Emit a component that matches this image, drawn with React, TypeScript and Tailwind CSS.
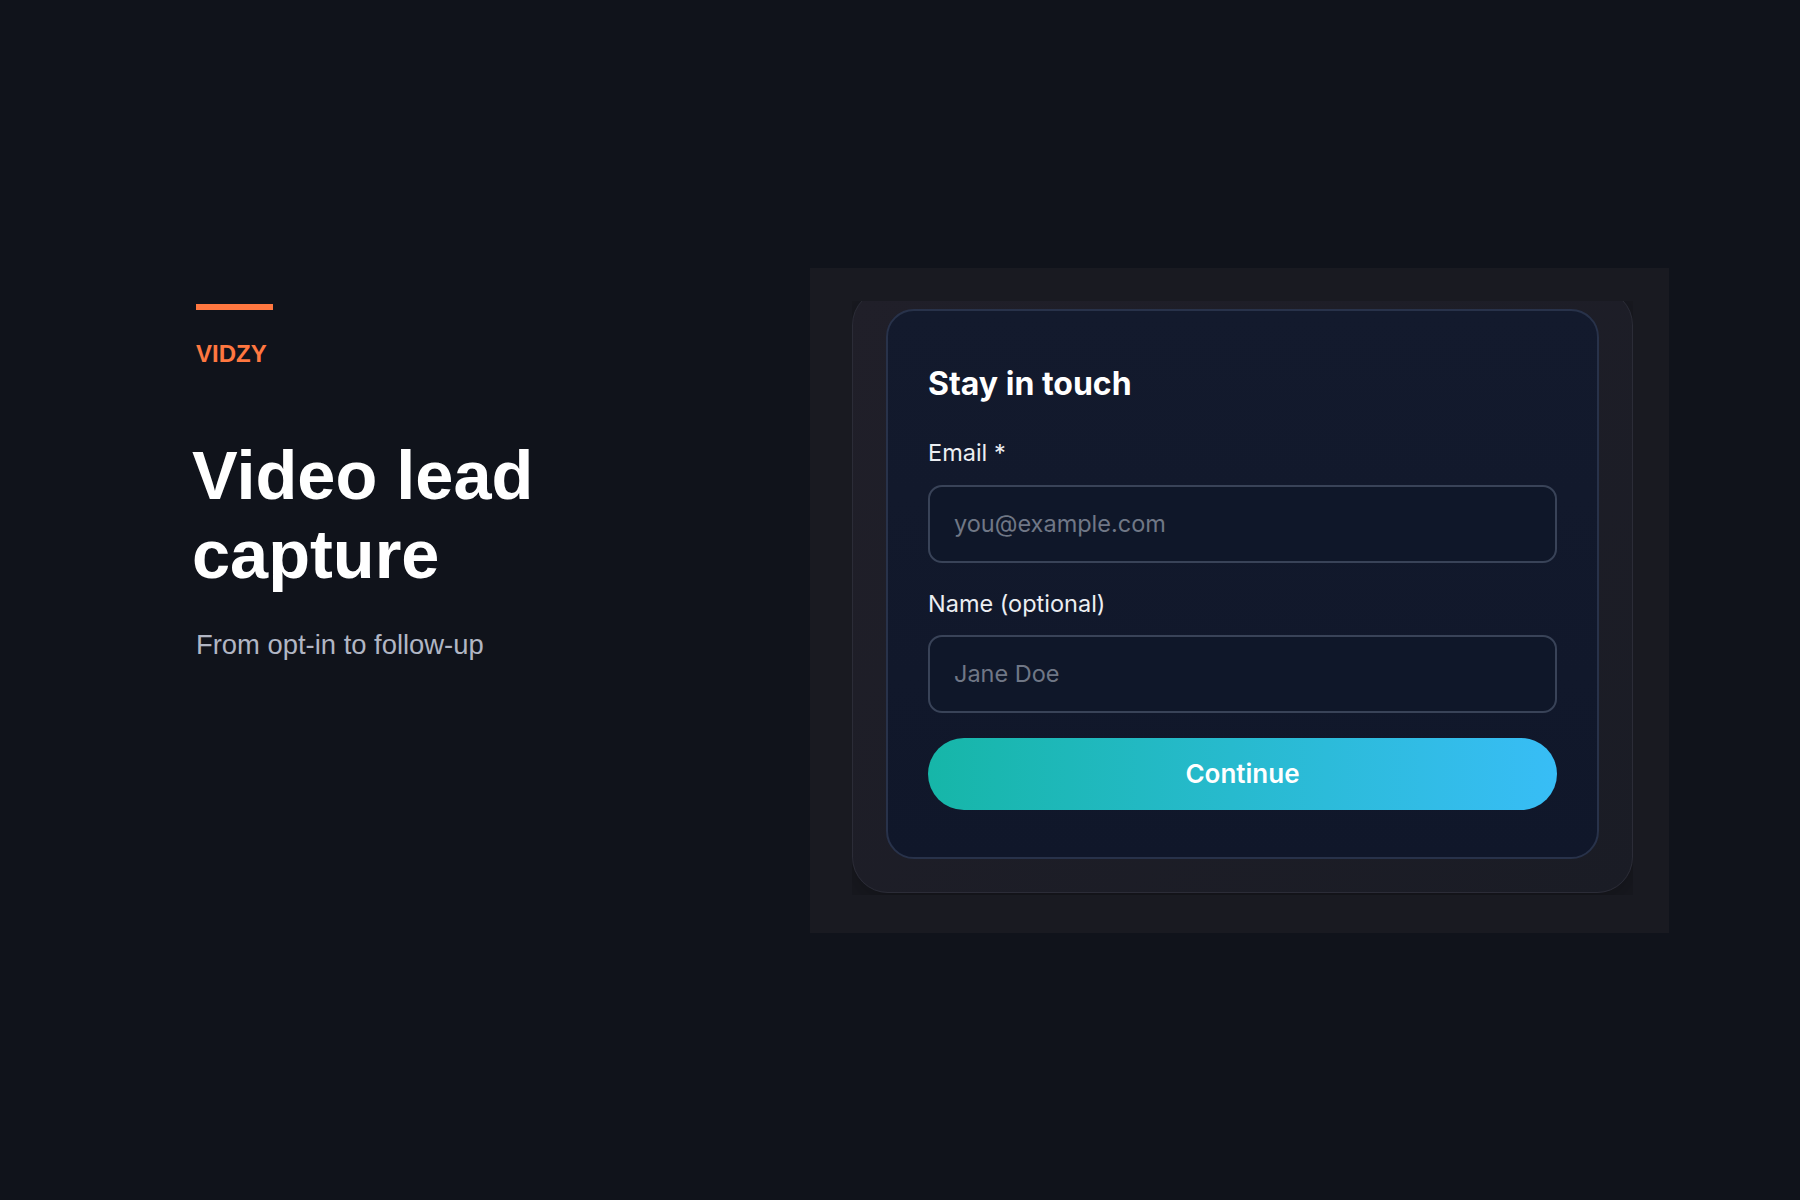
export default function App() {
  return (
    <main className="flex h-screen w-full items-center bg-[#10131b] pl-[196px] pr-[131px]">
      {/* left intro */}
      <section className="flex-1 self-start pt-[304px] font-['Liberation_Sans',Arial,sans-serif]">
        <div className="h-[6px] w-[77px] bg-[#ff7740]" />
        <p className="mt-[26px] text-[24px] leading-[36px] font-bold text-[#ff7740]">VIDZY</p>
        <h1 className="mt-[64px] -ml-[4px] text-[68.5px] leading-[79px] font-bold text-white">
          Video lead
          <br />
          capture
        </h1>
        <p className="mt-[31px] text-[27.4px] leading-[40px] text-[#b1b6c4]">From opt-in to follow-up</p>
      </section>

      {/* preview panel */}
      <section className="flex h-[665px] w-[859px] flex-col bg-[#191a21] pb-[38px] pl-[42px] pr-[36px] pt-[33px]">
        <div className="flex-1 overflow-hidden">
          <div className="-mt-[12px] rounded-[36px] border border-[#2b2c37] bg-gradient-to-br from-[#201f29] to-[#1a1c25] px-[33px] pb-[33px] pt-[19px] shadow-[0_10px_40px_rgba(0,0,0,0.35)]">
            <div className="rounded-[28px] border-2 border-[#28324a] bg-gradient-to-b from-[#131a2d] to-[#10172a] px-[40px] pb-[47px] pt-[53px] font-['Inter','Noto_Sans',sans-serif]">
              <h2 className="text-[32px] leading-[40px] font-bold text-white">Stay in touch</h2>

              <label className="mt-[34px] block text-[23.5px] leading-[30px] font-normal text-[#eceef2]">Email *</label>
              <input
                type="email"
                placeholder="you@example.com"
                className="mt-[17px] block h-[78px] w-full rounded-[14px] border-2 border-[#394358] bg-[#0f1729] px-[24px] text-[23.5px] text-white outline-none placeholder:text-[#707786]"
              />

              <label className="mt-[26px] block text-[23.5px] leading-[30px] font-normal text-[#eceef2]">Name (optional)</label>
              <input
                type="text"
                placeholder="Jane Doe"
                className="mt-[16px] block h-[78px] w-full rounded-[14px] border-2 border-[#394358] bg-[#0f1729] px-[24px] text-[23.5px] text-white outline-none placeholder:text-[#707786]"
              />

              <button className="mt-[25px] flex h-[72px] w-full items-center justify-center rounded-full bg-gradient-to-r from-[#16b6a8] to-[#38bdf6] text-[26px] font-semibold text-white">
                Continue
              </button>
            </div>
          </div>
        </div>
      </section>
    </main>
  );
}
